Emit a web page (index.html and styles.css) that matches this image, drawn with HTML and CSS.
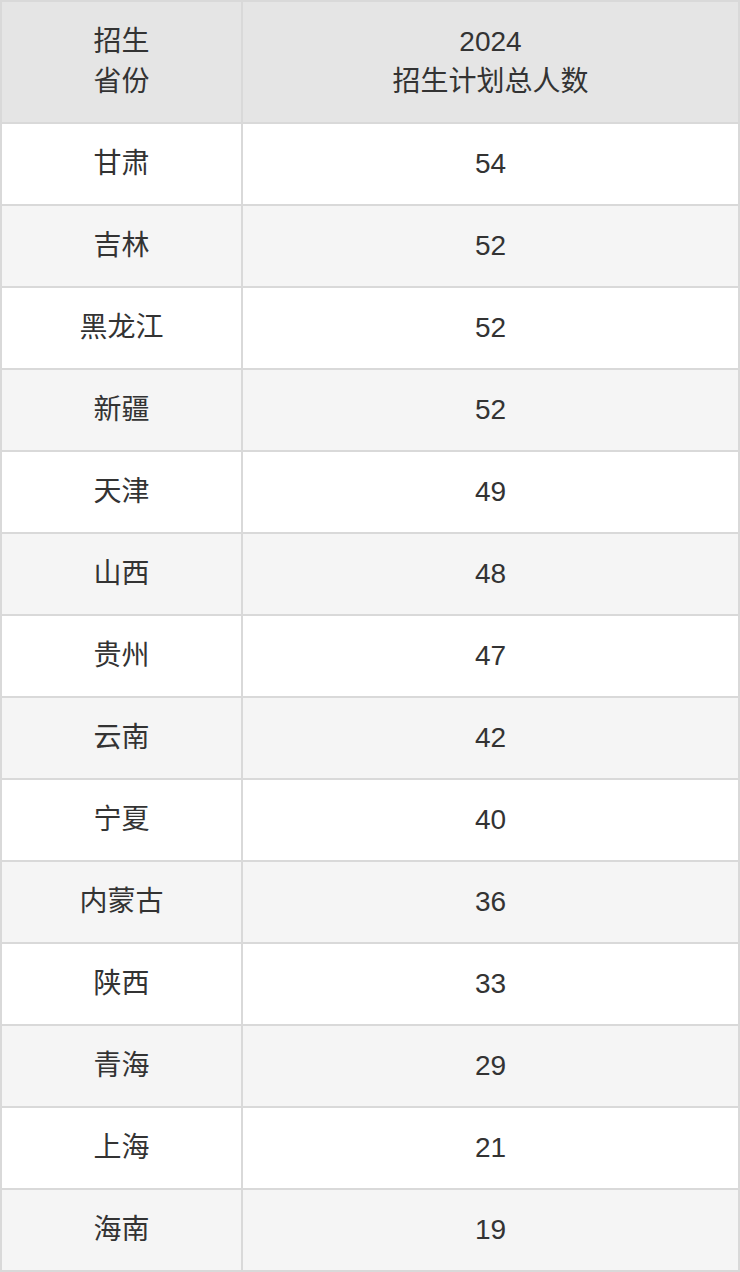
FILE: index.html
```html
<!DOCTYPE html>
<html lang="zh-CN">
<head>
<meta charset="utf-8">
<title>招生计划</title>
<link rel="stylesheet" href="styles.css">
</head>
<body>
<table class="plan">
  <thead>
    <tr>
      <th class="col-prov">招生<br>省份</th>
      <th class="col-num">2024<br>招生计划总人数</th>
    </tr>
  </thead>
  <tbody>
    <tr><td>甘肃</td><td>54</td></tr>
    <tr><td>吉林</td><td>52</td></tr>
    <tr><td>黑龙江</td><td>52</td></tr>
    <tr><td>新疆</td><td>52</td></tr>
    <tr><td>天津</td><td>49</td></tr>
    <tr><td>山西</td><td>48</td></tr>
    <tr><td>贵州</td><td>47</td></tr>
    <tr><td>云南</td><td>42</td></tr>
    <tr><td>宁夏</td><td>40</td></tr>
    <tr><td>内蒙古</td><td>36</td></tr>
    <tr><td>陕西</td><td>33</td></tr>
    <tr><td>青海</td><td>29</td></tr>
    <tr><td>上海</td><td>21</td></tr>
    <tr><td>海南</td><td>19</td></tr>
  </tbody>
</table>
</body>
</html>
```
FILE: styles.css
```css
html, body {
  margin: 0;
  padding: 0;
  background: #ffffff;
}

.plan {
  width: 740px;
  border-collapse: separate;
  border-spacing: 0;
  border-top: 2px solid #d9d9d9;
  border-left: 2px solid #d9d9d9;
  table-layout: fixed;
  font-family: "Liberation Sans", "Noto Sans CJK SC", sans-serif;
  font-size: 28px;
  color: #333333;
}

.plan th,
.plan td {
  border-right: 2px solid #d9d9d9;
  border-bottom: 2px solid #d9d9d9;
  text-align: center;
  vertical-align: middle;
  padding: 0;
  font-weight: normal;
}

.plan th {
  height: 120px;
  line-height: 40px;
  background: #e5e5e5;
}

.plan .col-prov {
  width: 239px;
}

.plan td {
  height: 80px;
  line-height: 40px;
}

.plan tbody tr:nth-child(odd) td {
  background: #ffffff;
}

.plan tbody tr:nth-child(even) td {
  background: #f5f5f5;
}
```
